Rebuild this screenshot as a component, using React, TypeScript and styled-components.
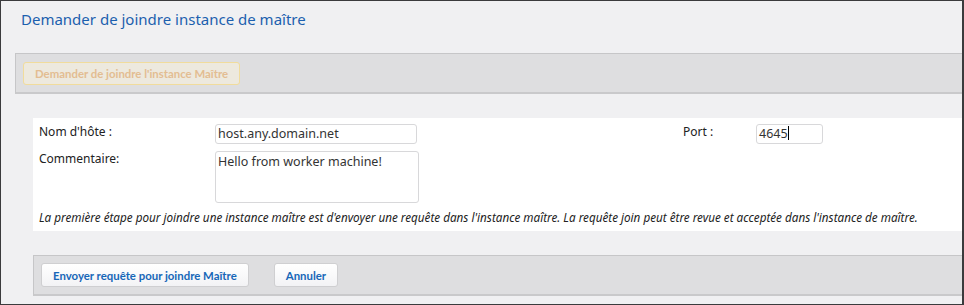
import styled, { createGlobalStyle } from 'styled-components';

const GlobalStyle = createGlobalStyle`
    html, body {
        margin: 0;
        padding: 0;
        background: #f0f0f2;
    }
    * {
        box-sizing: border-box;
    }
`;

const Frame = styled.div`
    width: 964px;
    height: 305px;
    border: 1px solid #3b3b3d;
    border-right-width: 2px;
    background: #f0f0f2;
    font-family: 'Noto Sans', 'Open Sans', sans-serif;
    overflow: hidden;
`;

const Title = styled.h1`
    margin: 0;
    padding: 8px 0 0 20px;
    height: 52px;
    font-size: 15px;
    font-weight: 400;
    color: #1c5fae;
`;

const Toolbar = styled.div<{ $indent: number }>`
    display: flex;
    align-items: center;
    gap: 25px;
    margin-left: ${({ $indent }) => $indent}px;
    height: 41px;
    padding: 0 7px;
    background: #dedee0;
    border-top: 1px solid #c6c6c8;
    border-left: 1px solid #c6c6c8;
    border-bottom: 2px solid #c9c9cb;
`;

const DisabledButton = styled.button`
    height: 23px;
    padding: 0 11px;
    border: 1px solid #f1dc9c;
    border-radius: 3px;
    background: #ede9de;
    color: #e3bd92;
    font-family: 'Lato', sans-serif;
    font-size: 11.4px;
    font-weight: 700;
`;

const ActionButton = styled.button`
    height: 24px;
    padding: 0 11px;
    border: 1px solid #cfcfd1;
    border-radius: 3px;
    background: linear-gradient(#ffffff, #f3f3f5);
    color: #1767b8;
    font-family: 'Lato', sans-serif;
    font-size: 11.4px;
    font-weight: 700;
`;

const Panel = styled.div`
    margin: 24px 0 24px 32px;
    height: 113px;
    padding: 6px 0 0 6px;
    background: #ffffff;
`;

const FormGrid = styled.div`
    display: grid;
    grid-template-columns: 176px 468px 73px 67px;
    row-gap: 7px;
    align-items: start;
`;

const Label = styled.label`
    font-size: 12px;
    color: #222;
    line-height: 20px;
    margin-top: -2px;
`;

const TextInput = styled.div<{ $width: number }>`
    width: ${({ $width }) => $width}px;
    height: 20px;
    padding: 0 2px;
    border: 1px solid #d8d8da;
    border-radius: 3px;
    font-size: 12.5px;
    line-height: 18px;
    color: #333;
`;

const Caret = styled.span`
    display: inline-block;
    width: 1px;
    height: 14px;
    background: #000;
    vertical-align: -2px;
`;

const TextArea = styled.div`
    grid-column: 2 / 3;
    width: 204px;
    height: 52px;
    padding: 1px 2px;
    border: 1px solid #d8d8da;
    border-radius: 3px;
    font-size: 12.5px;
    line-height: 18px;
    color: #333;
`;

const Note = styled.p`
    margin: 6px 0 0;
    font-size: 11.7px;
    font-style: italic;
    color: #222;
`;

export default function App() {
    return (
        <>
            <GlobalStyle />
            <Frame>
                <Title>Demander de joindre instance de maître</Title>
                <Toolbar $indent={14}>
                    <DisabledButton disabled>Demander de joindre l'instance Maître</DisabledButton>
                </Toolbar>
                <Panel>
                    <FormGrid>
                        <Label>Nom d'hôte :</Label>
                        <TextInput $width={202}>host.any.domain.net</TextInput>
                        <Label>Port :</Label>
                        <TextInput $width={67}>
                            4645
                            <Caret />
                        </TextInput>
                        <Label>Commentaire:</Label>
                        <TextArea>Hello from worker machine!</TextArea>
                    </FormGrid>
                    <Note>
                        La première étape pour joindre une instance maître est d'envoyer une requête dans
                        l'instance maître. La requête join peut être revue et acceptée dans l'instance de
                        maître.
                    </Note>
                </Panel>
                <Toolbar $indent={32}>
                    <ActionButton>Envoyer requête pour joindre Maître</ActionButton>
                    <ActionButton>Annuler</ActionButton>
                </Toolbar>
            </Frame>
        </>
    );
}
